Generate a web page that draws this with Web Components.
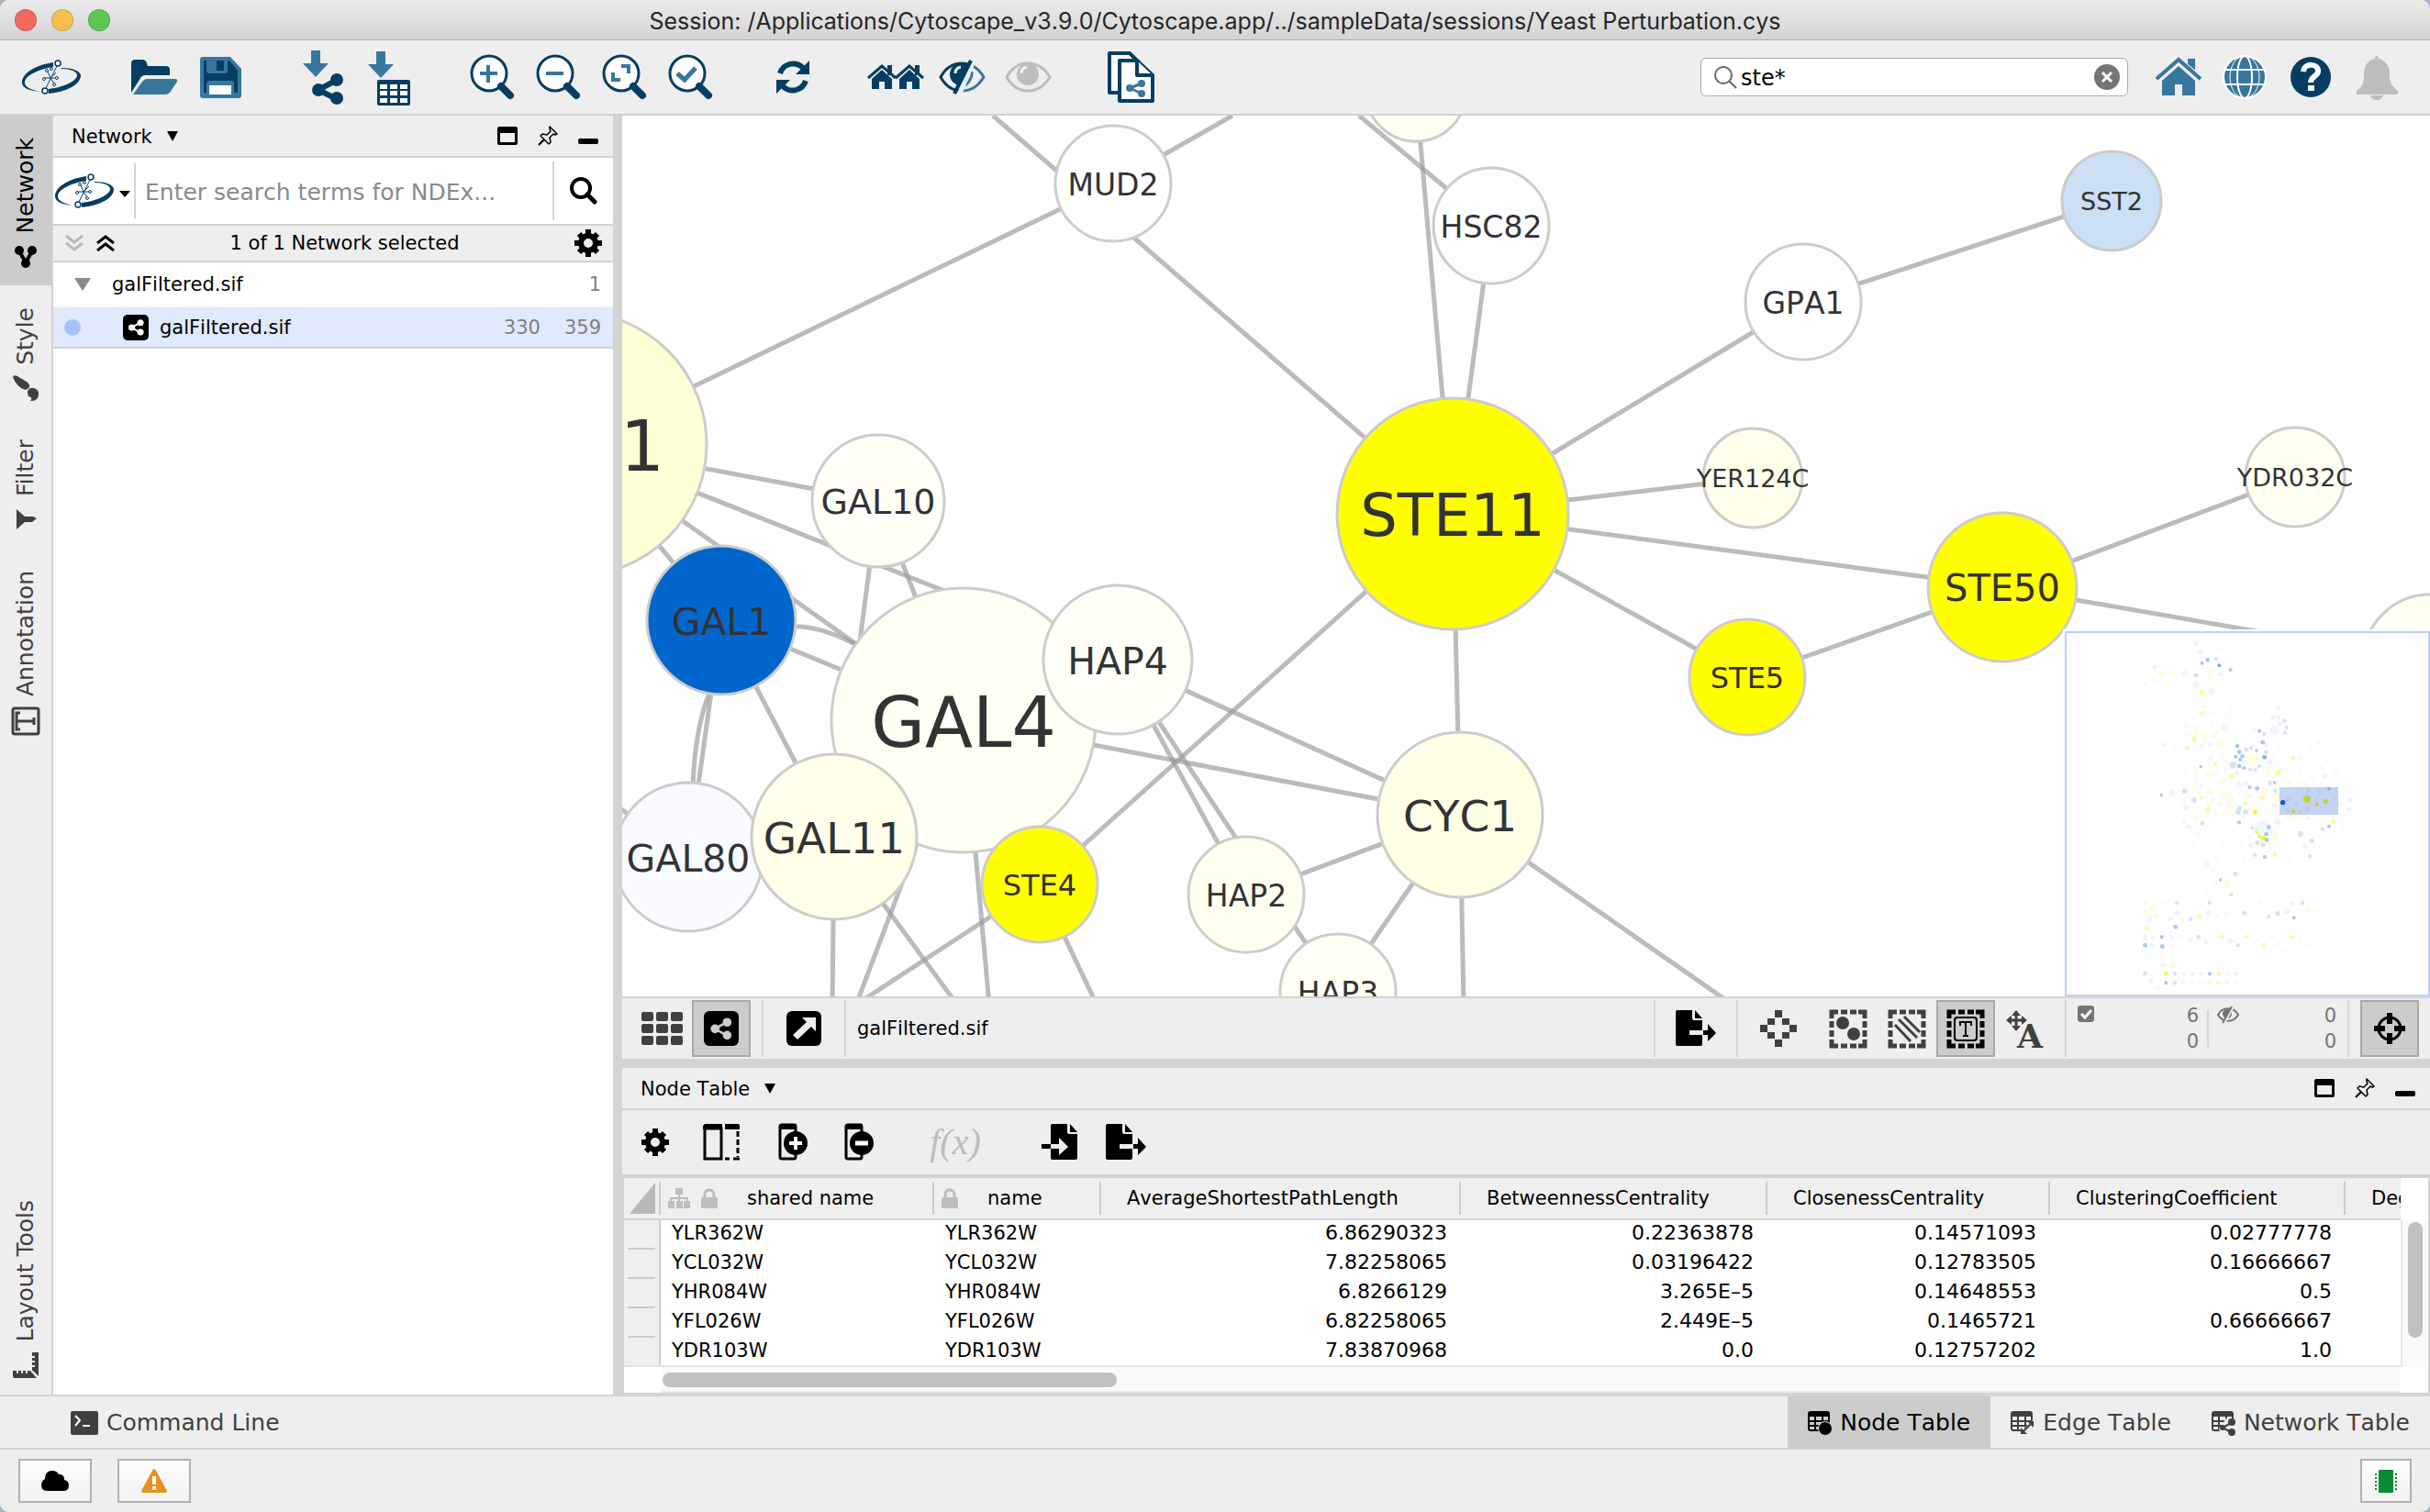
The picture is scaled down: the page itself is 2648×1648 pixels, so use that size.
<!DOCTYPE html>
<html lang="en">
<head>
<meta charset="utf-8">
<title>Cytoscape</title>
<style>
html { background: #a9b4c4; }
body {
  margin: 0;
  font-family: "DejaVu Sans", "Noto Sans", sans-serif;
  font-size: 21px;
  line-height: 28px;
  font-kerning: none;
  color: #000;
}
</style>
</head>
<body>
<cy-app></cy-app>
<script>
const NAVY = '#053e62', STEEL = '#37779e', DARK = '#404040', PALE = '#bdbdbd';

/* ---------- icon library: name -> [width, height, markup] ---------- */
const shareGlyph = (c, w) => `<g fill="${c}" stroke="${c}" stroke-width="${w}"><path d="M21 6 7 14l14 8" fill="none"/><circle cx="22" cy="6" r="4"/><circle cx="7" cy="14" r="4"/><circle cx="22" cy="22" r="4"/></g>`;
const lens = inner => `<circle cx="29" cy="28" r="19" fill="#fff" stroke="${NAVY}" stroke-width="3"/><path d="M42 42 52 52" stroke="${NAVY}" stroke-width="8" stroke-linecap="round"/><path d="${inner}" fill="none" stroke="${STEEL}" stroke-width="4"/>`;
const marquee = (c, inner) => `<g fill="none" stroke="${c}" stroke-width="5"><path d="M2 9V2h7M31 2h7v7M38 32v7h-7M9 39H2v-7"/><path d="M12 2h7M22 2h7M12 39h7M22 39h7M2 12v7M2 22v7M38 12v7M38 22v7"/></g>${inner}`;
const house = (cx, c) => `<path d="M${cx - 15} 33 ${cx} 20 ${cx + 15} 33" fill="none" stroke="${c}" stroke-width="3"/><path d="M${cx + 6} 19h5v11h-5z" fill="${c}"/><path d="M${cx - 11} 34 ${cx} 24l11 10v11h-8v-8h-6v8h-8z" fill="${c}"/>`;
const gridTable = (c, extra) => `<rect x="1" y="1" width="22" height="20" rx="2" fill="none" stroke="${c}" stroke-width="2"/><path d="M1 1h22v5H1z" fill="${c}"/><path d="M1 11h22M1 16h22M8 5v16M16 5v16" stroke="${c}" stroke-width="2"/>${extra}`;
const docBody = 'M2 0h16v9q0 2 2 2h9v26q0 2-2 2H2q-2 0-2-2V2q0-2 2-2z';
const eye = (c, w) => `<path d="M9 32C20 12 44 12 56 32 44 52 20 52 9 32z" fill="none" stroke="${c}" stroke-width="${w}"/>`;

const ICONS = {
  logo: [64, 64, `<g fill="${NAVY}"><path d="M34 16C14 19 0 28 0 38c0 6 8 9 20 10C10 46 3 43 3 38c0-7 13-14 31-17z"/><path d="M43 22c12 0 20 3 21 8 0 10-15 18-35 20v-5c17-2 31-9 31-15 0-4-7-7-17-7z"/></g><g fill="none" stroke="${NAVY}" stroke-width="1"><path d="M38 20 26 44M31 33l-3-7M31 33l6-6M31 33h7M31 33l4 6M31 33h-6"/><g fill="#f6f6f6"><circle cx="39" cy="17" r="3" stroke-width="1.5"/><circle cx="25" cy="47" r="3" stroke-width="1.5"/><circle cx="27" cy="25" r="1.5"/><circle cx="38" cy="33" r="1.5"/><circle cx="35" cy="40" r="1.5"/><circle cx="24" cy="34" r="1.5"/><circle cx="32" cy="23" r="1.5"/></g></g>`],
  open: [64, 64, `<path d="M7 17q0-4 4-4h8q4 0 5 4l1 3h20q4 0 4 4v6H22q-4 0-6 5L7 49z" fill="${NAVY}"/><path d="M9 51 19 37q2-3 5-3h31q3 0 2 3l-8 12q-2 2-5 2z" fill="${STEEL}"/>`],
  save: [64, 64, `<path d="M13 10h30l12 13v29q0 3-3 3H13q-3 0-3-3V13q0-3 3-3z" fill="${STEEL}"/><path d="M14 14h28l9 11v24H14z" fill="${NAVY}"/><path d="M17 12h23v13q0 3-3 3H20q-3 0-3-3z" fill="${STEEL}"/><path d="M28 14h8v11h-8z" fill="${NAVY}"/><path d="M17 54V40q0-4 4-4h23q3 0 3 4v14z" fill="${STEEL}"/><path d="M20 41h24v10H20z" fill="#fff"/>`],
  importNet: [64, 64, `<path d="M19 3h10v14h9L24 32 10 17h9z" fill="${STEEL}"/><path d="M47 35 27 46l20 10" fill="none" stroke="${NAVY}" stroke-width="6"/><g fill="${NAVY}"><circle cx="47" cy="35" r="7"/><circle cx="27" cy="46" r="7"/><circle cx="47" cy="55" r="7"/></g>`],
  importTable: [64, 64, `<path d="M18 4h10v14h9L23 33 9 18h9z" fill="${STEEL}"/><rect x="19" y="35" width="36" height="28" rx="2" fill="${NAVY}"/><path fill="#fff" d="M22 40h8v5h-8zM33 40h8v5h-8zM44 40h8v5h-8zM22 47h8v5h-8zM33 47h8v5h-8zM44 47h8v5h-8zM22 55h8v5h-8zM33 55h8v5h-8zM44 55h8v5h-8z"/>`],
  zoomIn: [64, 64, lens('M19 28h19M28 19v19')],
  zoomOut: [64, 64, lens('M19 28h19')],
  zoomFit: [64, 64, lens('M29 20h8v8M20 27v8h8')],
  zoomSel: [64, 64, `${lens('')}<path d="M18 28l8 7L38 22" fill="none" stroke="${STEEL}" stroke-width="5"/>`],
  refresh: [64, 64, `<path d="M18 28A15 15 0 0 1 43 22M46 36A15 15 0 0 1 21 42" fill="none" stroke="${NAVY}" stroke-width="6"/><path d="M50 14v15H35zM14 50V35h15z" fill="${NAVY}"/>`],
  houses: [64, 64, house(17, NAVY) + house(47, NAVY)],
  hide: [64, 64, `<clipPath id="l"><path d="M0 0h45L22 64H0z"/></clipPath><clipPath id="r"><path d="M50 8h14v56H27z"/></clipPath><g clip-path="url(#l)">${eye(NAVY, 3)}<circle cx="31" cy="29" r="12" fill="${NAVY}"/><path d="M25 28q0-6 6-7" fill="none" stroke="#eee" stroke-width="3"/></g><g clip-path="url(#r)">${eye(STEEL, 3)}<path d="M43 26q1 8-7 15" fill="none" stroke="${STEEL}" stroke-width="3"/></g><path d="M42 14 24 50" stroke="${NAVY}" stroke-width="4"/>`],
  show: [64, 64, `${eye(PALE, 3)}<circle cx="32" cy="29" r="12" fill="${PALE}"/><path d="M25 28q0-6 6-7" fill="none" stroke="#eee" stroke-width="3"/>`],
  docs: [64, 64, `<g fill="#fff" stroke="${NAVY}" stroke-width="4" stroke-linejoin="round"><path d="M20 49H9V6h22l10 10z"/><path d="M20 14h19l17 16v28H20z"/><path d="M39 14v16h17"/></g><path d="M44 39 31 44l13 6" fill="none" stroke="${STEEL}" stroke-width="3"/><g fill="${STEEL}"><circle cx="44" cy="39" r="4"/><circle cx="31" cy="44" r="4"/><circle cx="44" cy="50" r="4"/></g>`],
  home: [64, 64, `<g fill="${STEEL}"><path d="M42 12h8v18l-8-8z"/><path d="M14 36 32 20l18 16v16H36V40h-8v12H14z"/></g><path d="M8 34 32 14l24 20" fill="none" stroke="#eee" stroke-width="7"/><path d="M8 34 32 13l24 21" fill="none" stroke="${STEEL}" stroke-width="4"/>`],
  globe: [64, 64, `<circle cx="32" cy="32" r="24" fill="#fff"/><circle cx="32" cy="32" r="22" fill="${STEEL}"/><g fill="none" stroke="#fff" stroke-width="2"><ellipse cx="32" cy="32" rx="8" ry="23"/><ellipse cx="32" cy="32" rx="16" ry="23" stroke-width="1"/><path d="M9 24h46M9 40h46"/></g>`],
  help: [64, 64, `<circle cx="32" cy="32" r="22" fill="${NAVY}"/><path d="M24 26c1-10 17-9 16 0 0 5-8 5-8 12" fill="none" stroke="#fff" stroke-width="6"/><path d="M29 41h7v6h-7z" fill="#fff"/>`],
  bell: [64, 64, `<path d="M32 9q2 0 2 3c9 2 12 9 12 17 0 9 2 13 9 18v4H10v-4c7-5 8-9 8-18 0-8 3-15 12-17q0-3 2-3zM25 52h14q-1 5-7 5t-7-5z" fill="${PALE}"/>`],
  lensThin: [26, 26, `<circle cx="11" cy="11" r="9" fill="none" stroke="#666" stroke-width="2"/><path d="M17 17l8 8" stroke="#666" stroke-width="2"/>`],
  clear: [28, 28, `<circle cx="14" cy="14" r="14" fill="#757575"/><path d="M9 9l10 10M19 9 9 19" stroke="#fff" stroke-width="3"/>`],
  lensBold: [30, 30, `<circle cx="12" cy="12" r="10" fill="none" stroke="#000" stroke-width="4"/><path d="M19 19l8 8" stroke="#000" stroke-width="5" stroke-linecap="round"/>`],
  caret: [12, 12, `<path d="M0 0h12L6 11z"/>`],
  smallCaret: [12, 8, `<path d="M0 0h12L6 7z"/>`],
  treeCaret: [18, 14, `<path d="M0 0h18L9 14z" fill="#8a8a8a"/>`],
  float: [22, 20, `<path d="M2 0h18q2 0 2 2v16q0 2-2 2H2q-2 0-2-2V2q0-2 2-2zM3 7v10h16V7z" fill-rule="evenodd"/>`],
  pin: [22, 22, `<path d="M13 1l8 8-2 1-2-1-4 4 1 5-2 2-9-9 2-2 5 1 4-4-1-2z" fill="none" stroke="#000" stroke-width="1.5" stroke-linejoin="round"/><path d="M7 15l-6 6" stroke="#000" stroke-width="2"/>`],
  min: [22, 20, `<rect y="13" width="22" height="6" rx="2"/>`],
  chevDown: [20, 18, `<path d="M1 1l9 7 9-7M1 9l9 7 9-7" fill="none" stroke="#bbb" stroke-width="3"/>`],
  chevUp: [20, 18, `<path d="M1 9l9-7 9 7M1 17l9-7 9 7" fill="none" stroke="#000" stroke-width="3"/>`],
  gear: [30, 30, `<g transform="translate(15 15)"><circle r="8" fill="none" stroke="#000" stroke-width="6"/><g stroke="#000" stroke-width="6"><path d="M0-15v6M0 15V9M-15 0h6M15 0H9"/><path d="M-10-10l4 4M10 10 6 6M-10 10l4-4M10-10 6-6"/></g></g>`],
  netBadge: [28, 28, `<rect width="28" height="28" rx="5"/><g transform="translate(5 5) scale(.64)">${shareGlyph('#fff', 3)}</g>`],
  netBadgeL: [38, 38, `<rect width="38" height="38" rx="6"/><g transform="translate(6 7) scale(.88)">${shareGlyph('#ccc', 3)}</g>`],
  detach: [38, 38, `<rect width="38" height="38" rx="6"/><path d="M17 7h15v15l-5-5-15 14-5-5 15-14z" fill="#eee"/>`],
  grid: [46, 36, [0, 16, 32].map(x => [0, 13, 26].map(y => `<rect x="${x}" y="${y}" width="13" height="10" rx="2" fill="${DARK}"/>`).join('')).join('')],
  exportDoc: [44, 40, `<path d="${docBody}"/><path d="M21 0l8 9h-8z"/><path d="M15 22h15v5H15z" fill="#eee"/><path d="M30 22h5v-7l9 10-9 9v-7h-5z"/>`],
  importDoc: [40, 40, `<g transform="translate(10 0)"><path d="${docBody}"/><path d="M21 0l8 9h-8z"/></g><path d="M0 22h10v5H0z"/><path d="M10 22h9v-7l10 10-10 9v-7h-9z" fill="#eee"/>`],
  diamond: [40, 40, `<path fill="${DARK}" d="M16 0h8v8h-8zM16 32h8v8h-8zM0 16h8v8H0zM32 16h8v8h-8zM8 9h8v7H8zM24 9h8v7h-8zM8 24h8v7H8zM24 24h8v7h-8z"/>`],
  selNodes: [40, 41, marquee(DARK, `<circle cx="14" cy="14" r="7" fill="${DARK}"/><circle cx="26" cy="26" r="7" fill="${DARK}"/>`)],
  selEdges: [40, 41, marquee(DARK, `<path d="M7 16l17 18M11 10l20 20M17 7l17 17" stroke="${DARK}" stroke-width="3"/>`)],
  selAnno: [40, 41, marquee('#000', `<rect x="8" y="8" width="24" height="25" rx="3" fill="none" stroke="#000" stroke-width="2"/><path d="M14 17v-4h12v4M20 13v15M17 28h6" fill="none" stroke="#000" stroke-width="2"/>`)],
  selLabel: [40, 41, `<path d="M11 3v17M3 11h17" stroke="${DARK}" stroke-width="3"/><path fill="${DARK}" d="M11 0l5 6H6zM11 23l5-6H6zM0 11l6-5v10zM23 11l-6-5v10z"/><text x="26" y="41" text-anchor="middle" font-family="DejaVu Serif" font-weight="700" font-size="36" fill="${DARK}">A</text>`],
  checked: [18, 18, `<rect width="18" height="18" rx="3" fill="#757575"/><path d="M4 9l4 4 7-8" fill="none" stroke="#fff" stroke-width="3"/>`],
  hiddenEye: [24, 20, `<path d="M1 10C6 1 18 1 23 10 18 19 6 19 1 10z" fill="none" stroke="#757575" stroke-width="2"/><circle cx="11" cy="9" r="5" fill="#757575"/><path d="M18 1 8 19" stroke="#eee" stroke-width="2"/><path d="M16 1 6 19" stroke="#757575" stroke-width="2"/>`],
  target: [34, 34, `<circle cx="17" cy="17" r="12" fill="none" stroke="#000" stroke-width="3"/><path d="M17 0v12M17 34V22M0 17h12M34 17H22" stroke="#000" stroke-width="6"/>`],
  split: [42, 40, `<path d="M3 5h18v33H3z" fill="none" stroke="#000" stroke-width="3"/><path d="M3 0h19v6H1V2zM25 0h14q2 0 2 2v4H25z"/><path d="M39 8v28" stroke="#000" stroke-width="3" stroke-dasharray="6 3"/><path d="M25 38h5M34 38h7" stroke="#000" stroke-width="3"/>`],
  colAdd: [32, 42, `<rect x="2" y="2" width="17" height="37" rx="2" fill="none" stroke="#000" stroke-width="3"/><path d="M2 1h18v6H1z"/><circle cx="19" cy="22" r="13"/><path d="M12 22h14M19 15v14" stroke="#fff" stroke-width="4"/>`],
  colDel: [32, 42, `<rect x="2" y="2" width="17" height="37" rx="2" fill="none" stroke="#000" stroke-width="3"/><path d="M2 1h18v6H1z"/><circle cx="19" cy="22" r="13"/><path d="M12 22h14" stroke="#fff" stroke-width="5"/>`],
  corner: [28, 34, `<path d="M28 0v34H0z" fill="#b9b9b9"/>`],
  hierarchy: [24, 22, `<g fill="${PALE}"><path d="M8 0h8v7H8zM0 14h7v8H0zM9 14h7v8H9zM17 14h7v8h-7z"/></g><path d="M12 6v8M3 14v-3h18v3" fill="none" stroke="${PALE}" stroke-width="2"/>`],
  lock: [18, 22, `<rect y="10" width="18" height="12" rx="2" fill="${PALE}"/><path d="M4 10V6q1-4 5-4t5 4v4" fill="none" stroke="${PALE}" stroke-width="3"/>`],
  sideNet: [28, 28, `<path d="M6 7l8 14 8-14" fill="none" stroke="#000" stroke-width="4"/><circle cx="7" cy="8" r="5"/><circle cx="21" cy="8" r="5"/><circle cx="14" cy="22" r="5"/>`],
  brush: [28, 28, `<g fill="${DARK}"><path d="M0 2Q1-1 5 1l10 6q4 3 3 6-3 4-7 2Q4 12 0 2z"/><path d="M16 18q1-5 7-4 6 2 5 8-1 6-9 6 2-2 1-4-4 0-4-6z"/></g>`],
  funnel: [28, 28, `<path d="M4 3l9 8h9l4 2-5 4h-8l-9 8z" fill="${DARK}"/>`],
  anno: [32, 32, `<rect x="2" y="2" width="28" height="28" rx="2" fill="none" stroke="${DARK}" stroke-width="3"/><path d="M10 7H6v18h4M6 16h19M25 12v8" fill="none" stroke="${DARK}" stroke-width="3"/>`],
  ruler: [28, 28, `<path d="M21 0h7v26L22 20H21zM0 20h19l7 8H2q-2 0-2-2z" fill="${DARK}"/><path d="M20 5h4M20 10h4M20 15h4M5 19v4M10 19v4M15 19v4" stroke="#eee" stroke-width="2"/>`],
  terminal: [30, 26, `<rect width="30" height="26" rx="2" fill="${DARK}"/><path d="M5 5l5 5-5 6M13 16h8" fill="none" stroke="#fff" stroke-width="2"/>`],
  tabNode: [26, 26, gridTable('#000', '<circle cx="19" cy="19" r="8" fill="#ccc"/><circle cx="19" cy="19" r="7"/>')],
  tabEdge: [26, 26, gridTable(DARK, `<path d="M8 26 26 8v18z" fill="#eee"/><path d="M12 24 24 12" stroke="${DARK}" stroke-width="2"/><path d="M18 11h7v7zM18 25h-7v-7z" fill="${DARK}"/>`)],
  tabNet: [26, 26, gridTable(DARK, `<path d="M8 19l8-11h10v18H10z" fill="#eee"/><path d="M23 12l-11 6 11 6" fill="none" stroke="${DARK}" stroke-width="2"/><g fill="${DARK}"><circle cx="22" cy="12" r="4"/><circle cx="12" cy="18" r="3"/><circle cx="22" cy="23" r="4"/></g>`)],
  cloud: [30, 22, `<path d="M7 22q-7 0-7-6 0-5 4-7 0-9 8-9 5 0 7 4 6-1 6 6 5 1 5 6 0 6-6 6z"/>`],
  warn: [28, 26, `<path d="M14 0q1 0 2 2l12 22q0 2-2 2H2q-2 0-2-2L12 2q1-2 2-2z" fill="#ea9020"/><path d="M14 8v9M14 19v4" stroke="#fff" stroke-width="4"/>`],
  chip: [24, 26, `<rect x="4" y="1" width="16" height="25" rx="1" fill="#0a8b32"/><path d="M1 5v20M23 5v20" stroke="#0a8b32" stroke-width="2" stroke-dasharray="2 2"/>`]
};

/* ---------- helpers ---------- */
function define(tag, render) {
  customElements.define(tag, class extends HTMLElement {
    connectedCallback() {
      if (this.shadowRoot) return;
      this.attachShadow({ mode: 'open' }).innerHTML = render(this);
    }
  });
}
const icon = n => `<cy-icon name="${n}"></cy-icon>`;
const tool = (n, label, attrs = '') => `<cy-tool label="${label}" ${attrs}>${icon(n)}</cy-tool>`;

define('cy-icon', el => {
  const [w, h, body] = ICONS[el.getAttribute('name')];
  return `<style>:host{display:block;flex:none}svg{display:block;overflow:visible}</style><svg width="${w}" height="${h}" viewBox="0 0 ${w} ${h}" aria-hidden="true">${body}</svg>`;
});

/* Flat icon button; "pressed" gives the toggled look, "boxed" the framed one. */
define('cy-tool', el => `<style>
  :host{display:block;flex:none;width:var(--tool-w,72px)}
  button{display:flex;align-items:center;justify-content:center;box-sizing:border-box;width:100%;height:var(--tool-h,80px);margin:0;padding:0;border:0;background:none;color:inherit;font:inherit}
  :host([pressed]) button{background:#ccc;border:2px solid #a9a9a9}
  :host([boxed]) button{background:linear-gradient(#fcfcfc,#f3f3f3);border:2px solid #b0b0b0}
</style><button type="button" aria-label="${el.getAttribute('label')}"><slot></slot></button>`);

/* Panel title bar with its three window controls. */
define('cy-panel-header', () => `<style>
  :host{display:flex;align-items:center;height:44px;padding:0 16px 0 20px;border-bottom:2px solid #d3d3d3;background:#eee;--tool-w:22px;--tool-h:28px}
  .menu{display:flex;align-items:center;gap:16px;padding:2px 0 0;border:0;background:none;font:inherit;font-kerning:inherit;color:inherit}
  .controls{display:flex;gap:22px;margin-left:auto}
</style><button class="menu" type="button"><slot></slot>${icon('caret')}</button>
<div class="controls">${tool('float', 'Float')}${tool('pin', 'Unpin')}${tool('min', 'Minimize')}</div>`);

define('cy-title-bar', () => `<style>
  :host{display:flex;align-items:center;height:43px;border-bottom:1px solid #aaa;background:linear-gradient(#ebebeb,#d3d3d3);padding:0 16px}
  .lights{display:flex;gap:16px;width:200px}
  button{width:24px;height:24px;padding:0;border:1px solid rgba(0,0,0,.15);border-radius:50%}
  .c{background:#ee6a5f}.m{background:#f5bf4f}.z{background:#61c555}
  h1{flex:1;margin:0 200px 0 0;padding-top:2px;text-align:center;font:400 25px/32px Inter,"Noto Sans",sans-serif;font-kerning:none;color:#262626;white-space:nowrap}
</style><div class="lights"><button class="c" aria-label="Close"></button><button class="m" aria-label="Minimize"></button><button class="z" aria-label="Zoom"></button></div>
<h1>Session: /Applications/Cytoscape_v3.9.0/Cytoscape.app/../sampleData/sessions/Yeast Perturbation.cys</h1>`);

define('cy-toolbar', () => `<style>
  :host{display:flex;align-items:center;background:#eee;border-bottom:2px solid #d2d2d2;padding:0 22px 0 20px}
  .groups{display:flex;gap:40px}.g{display:flex}
  .search{display:flex;align-items:center;gap:4px;box-sizing:border-box;width:466px;height:42px;margin:0 19px 0 auto;padding:0 8px 0 13px;border:1px solid #acacac;border-radius:6px;background:#fff;--tool-w:28px;--tool-h:28px}
  input{flex:1;min-width:0;padding:2px 0 0;border:0;outline:0;background:none;font:inherit;font-size:24px;color:#000}
</style>
<div class="groups">
 <div class="g">${tool('logo', 'Cytoscape')}</div>
 <div class="g">${tool('open', 'Open session')}${tool('save', 'Save session')}</div>
 <div class="g">${tool('importNet', 'Import network')}${tool('importTable', 'Import table')}</div>
 <div class="g">${tool('zoomIn', 'Zoom in')}${tool('zoomOut', 'Zoom out')}${tool('zoomFit', 'Fit content')}${tool('zoomSel', 'Fit selected')}</div>
 <div class="g">${tool('refresh', 'Apply layout')}</div>
 <div class="g">${tool('houses', 'First neighbors')}${tool('hide', 'Hide selected')}${tool('show', 'Show all')}</div>
 <div class="g">${tool('docs', 'New network from selection')}</div>
</div>
<div class="search">${icon('lensThin')}<input type="text" aria-label="Search nodes and edges" value="ste*">${tool('clear', 'Clear search')}</div>
<div class="g">${tool('home', 'Home')}${tool('globe', 'Web')}${tool('help', 'Help')}${tool('bell', 'Notifications')}</div>`);

define('cy-side-tab', el => `<style>
  :host{display:block}
  button{display:flex;flex-direction:column;align-items:center;gap:11px;width:100%;padding:24px 0 18px;border:0;background:none;color:#404040;font:inherit;font-kerning:inherit;font-size:25px;line-height:30px}
  :host([active]) button{background:#ccc;color:#000}
  span{writing-mode:vertical-rl;transform:rotate(180deg);white-space:nowrap}
</style><button type="button"><span><slot></slot></span>${icon(el.getAttribute('icon'))}</button>`);

define('cy-sidebar', () => `<style>
  :host{display:flex;flex-direction:column;flex:none;width:56px;border-right:2px solid #d3d3d3;background:#eee}
  cy-side-tab:last-child{margin-top:auto}
</style><cy-side-tab icon="sideNet" active>Network</cy-side-tab><cy-side-tab icon="brush">Style</cy-side-tab><cy-side-tab icon="funnel">Filter</cy-side-tab><cy-side-tab icon="anno">Annotation</cy-side-tab><cy-side-tab icon="ruler">Layout Tools</cy-side-tab>`);

define('cy-network-panel', () => `<style>
  :host{display:flex;flex-direction:column;flex:none;width:610px;background:#fff;border-right:10px solid #d3d3d3}
  .search{display:flex;align-items:center;height:72px;border-bottom:2px solid #d3d3d3}
  .source{display:flex;align-items:center;gap:6px;height:60px;padding:0 4px 0 2px;border:0;border-right:2px solid #d3d3d3;background:none}
  .source cy-icon:last-child{margin-top:8px}
  input{flex:1;min-width:0;padding:3px 10px 0;border:0;outline:0;font:inherit;font-kerning:inherit;font-size:25px;line-height:30px}
  input::placeholder{color:#8a8a8a;opacity:1}
  .go{display:flex;--tool-w:64px;--tool-h:64px;border-left:2px solid #d3d3d3}
  .status{display:flex;align-items:center;gap:14px;height:38px;padding:0 12px 0 13px;border-bottom:2px solid #d3d3d3;background:#eee;--tool-w:20px;--tool-h:30px}
  .status p{flex:1;margin:0;text-align:center}
  .status cy-tool:last-child{--tool-w:30px}
  .row{display:flex;align-items:center;height:48px;padding:0 13px 0 23px}
  .row .name{flex:1;margin-left:23px}
  .num{color:#808080;margin-left:26px}
  .row.sel{height:42px;padding-left:12px;border-top:2px solid #eee;border-bottom:2px solid #d3d3d3;background:#e1e9ff}
  .dot{width:18px;height:18px;border-radius:50%;background:#a9c0fb;margin-right:46px}
  .row.sel .name{margin-left:12px}
</style>
<cy-panel-header>Network</cy-panel-header>
<div class="search"><button class="source" type="button" aria-label="Network source">${icon('logo')}${icon('smallCaret')}</button><input type="text" aria-label="Search NDEx" placeholder="Enter search terms for NDEx..."><div class="go">${tool('lensBold', 'Search')}</div></div>
<div class="status">${tool('chevDown', 'Expand all')}${tool('chevUp', 'Collapse all')}<p>1 of 1 Network selected</p>${tool('gear', 'Options')}</div>
<div class="row">${icon('treeCaret')}<span class="name">galFiltered.sif</span><span class="num">1</span></div>
<div class="row sel"><span class="dot"></span>${icon('netBadge')}<span class="name">galFiltered.sif</span><span class="num">330</span><span class="num">359</span></div>`);

/* ---------- network graph ---------- */
const NODES = {
  L: [626, 484, 144, '#ffffd5'], TOP: [1543, 99, 55, '#fffff0'], R: [2648, 721, 73, '#fffff2'],
  MUD2: [1213, 200, 63, '#fefefe', 33], HSC82: [1625, 246, 63, '#fcfdff', 33],
  SST2: [2301, 219, 54, '#cbdff5', 27], GPA1: [1965, 329, 63, '#fdfeff', 33],
  STE11: [1583, 560, 126, '#ffff00', 64], YER124C: [1910, 521, 54, '#ffffeb', 27],
  YDR032C: [2501, 520, 54, '#fffff2', 27], STE50: [2182, 640, 81, '#ffff00', 40],
  STE5: [1904, 738, 63, '#ffff00', 32], CYC1: [1591, 888, 90, '#ffffe6', 47],
  HAP2: [1358, 975, 63, '#fffff0', 33], HAP3: [1458, 1081, 63, '#fffff5', 33],
  GAL4: [1050, 785, 144, '#fffff3', 76], HAP4: [1218, 719, 81, '#fffff8', 41],
  GAL10: [957, 546, 72, '#fffff7', 38], GAL1: [786, 676, 81, '#0066cc', 41],
  GAL80: [750, 934, 81, '#f8fbff', 41], GAL11: [909, 912, 90, '#ffffea', 47],
  STE4: [1133, 964, 63, '#ffff00', 32]
};
const LINKS = [
  ['MUD2', 'L'], ['MUD2', 1343, 126], ['STE11', 1082, 126], ['HSC82', 'STE11'], ['TOP', 'STE11'], ['HSC82', 1481, 126],
  ['STE11', 'GPA1'], ['GPA1', 'SST2'], ['STE11', 'YER124C'], ['STE11', 'STE50'], ['STE11', 'STE5'], ['STE5', 'STE50'],
  ['STE50', 'YDR032C'], ['STE50', 'R'], ['STE11', 'STE4'], ['STE11', 'CYC1'], ['CYC1', 1595, 1095], ['CYC1', 1888, 1095],
  ['CYC1', 'HAP2'], ['CYC1', 'HAP3'], ['CYC1', 'HAP4'], ['CYC1', 'GAL4'], ['HAP4', 'HAP2'], ['HAP4', 'HAP3'],
  ['L', 'GAL10'], ['L', 'HAP4'], ['L', 'GAL4'], ['L', 'GAL1'], ['GAL1', 'GAL4'], ['GAL10', 'GAL4'], ['GAL10', 'GAL11'],
  ['GAL1', 'GAL11'], ['GAL1', 'GAL80'], ['GAL80', 670, 877], ['GAL11', 907, 1095], ['GAL11', 1043, 1095],
  ['GAL4', 933, 1095], ['STE4', 933, 1095], ['GAL4', 1078, 1095], ['STE4', 1195, 1095]
];
function graphMarkup() {
  const edges = LINKS.map(([a, b, c]) => {
    const p = NODES[a], q = typeof b === 'string' ? NODES[b] : [b, c];
    return `<path d="M${p[0]} ${p[1]}L${q[0]} ${q[1]}"/>`;
  }).join('');
  const nodes = Object.entries(NODES).map(([id, [x, y, r, fill, fs]]) =>
    `<circle cx="${x}" cy="${y}" r="${r}" fill="${fill}"/>` +
    (fs ? `<text x="${x}" y="${Math.round(y + fs * 0.38)}" font-size="${fs}">${id}</text>` : '')).join('');
  return `<g transform="translate(-678 -126)"><g class="e">${edges}<path d="M860 683Q896 681 940 707M776 748Q757 790 755 860"/></g><g class="n">${nodes}<text x="700" y="513" font-size="76">1</text></g></g>`;
}

/* overview dots: colour class, then x y r triples in 1/3-pixel units */
const OVERVIEW = {
  '#fffff0': '559 54 6 542 81 7 528 263 6 512 293 10 499 254 6 574 276 6 553 301 6 573 307 6 512 324 6 733 326 6 632 358 6 425 360 6 445 362 6 591 342 5 390 401 7 509 420 6 541 427 9 553 442 6 457 475 6 527 486 6 559 476 7 455 518 7 468 550 6 543 513 8 573 588 12 556 570 6 653 387 11 688 478 10 669 446 6 714 435 6 728 458 7 760 470 9 797 489 6 867 475 7 894 451 7 830 410 6 799 439 6 857 386 6 799 517 7 819 525 6 601 549 6 623 561 7 578 628 6 494 627 6 538 654 6 637 695 7 610 721 6 550 721 6 581 673 6 703 717 6 742 735 6 718 671 6 870 637 8 940 663 6 785 536 6 811 626 6 526 766 7 520 846 7 495 870 5 545 885 6 517 807 7 614 773 6 761 766 6 742 681 6 646 933 7 586 951 6 821 967 6 857 939 5 412 1025 7 419 1054 6 515 1060 6 652 1037 6 802 1037 6 828 1051 6 725 1048 6 747 1070 6 349 1085 7 382 1085 7 447 1174 6 503 1174 6 381 1055 6',
  '#ffffdc': '508 154 9 500 173 6 292 198 6 320 182 7 348 162 8 385 160 7 485 272 6 427 332 7 461 341 7 461 356 6 492 368 7 486 382 7 529 352 6 516 367 6 534 390 11 641 442 20 590 376 5 424 482 7 457 493 7 499 491 9 543 512 8 503 548 9 549 552 7 564 555 6 573 568 8 512 577 6 539 589 7 503 591 7 456 635 7 525 619 6 553 622 7 417 580 6 463 688 7 447 717 5 617 635 6 635 565 6 632 605 6 684 546 8 725 565 14 763 521 7 736 479 6 697 494 7 706 467 6 729 407 6 840 505 8 916 488 6 714 698 11 788 635 6 755 632 6 772 632 6 866 732 6 930 588 7 561 853 10 292 913 7 346 914 6 318 931 10 295 943 9 328 955 7 413 969 6 528 957 5 557 950 6 669 913 6 826 937 7 706 1024 6 384 1116 6 419 1144 6 562 1144 5 418 1174 6 475 1174 6 508 1174 6 590 1174 6 333 1189 6',
  '#ffff8c': '479 224 8 478 292 6 454 377 7 430 405 7 523 458 6 575 499 7 726 489 8 776 439 6 675 568 7 620 588 6 478 570 5 497 608 8 716 753 6 909 647 7 298 996 6 471 957 7 543 1024 6 624 1024 6 774 1024 6 678 1051 6 533 1144 6 532 1174 6',
  '#ffff00': '652 616 7 661 678 9 679 700 8 361 1144 6',
  '#f1f6fc': '460 63 6 473 94 8 324 141 6 422 160 7 540 165 7 458 199 8 509 221 9 551 340 9 648 346 7 356 395 6 478 401 7 505 395 7 507 440 6 476 531 6 380 553 8 615 454 8 593 488 7 601 526 8 621 520 8 426 601 6 420 645 6 435 664 6 701 451 7 688 397 7 734 327 5 881 497 7 824 636 7 962 576 7 960 605 6 815 727 7 726 647 9 715 593 8 703 679 6 640 724 8 497 785 7 397 944 8 309 967 9 374 967 7 292 1025 7 319 1026 7 378 1024 6 440 1032 7 492 1041 7 500 944 8 571 1036 7 772 913 6 757 940 8 315 1052 7 351 1115 6 447 1144 6 476 1144 6 590 1144 6 560 1174 6 312 1168 7 676 665 22 716 348 13 710 306 7 729 307 6 727 275 7',
  '#d6e5f6': '460 168 7 524 114 6 580 461 11 623 411 6 639 405 6 682 360 6 688 419 7 666 465 6 653 478 6 636 476 6 749 317 6 755 338 6 750 356 6 422 547 8 453 576 8 601 603 8 597 615 8 621 615 8 480 652 7 701 520 7 718 546 6 643 667 6 666 695 6 659 716 7 679 723 7 652 755 6 801 687 9 837 710 7 831 760 6 873 671 6 588 817 7 574 885 6 397 913 6 441 966 6 617 946 7 697 957 6 726 947 7 807 913 6 467 1024 6 597 1051 6 292 1144 6 390 1144 6 390 1174 6 503 913 6',
  '#a9caee': '479 128 6 497 118 7 572 150 6 594 399 7 600 419 7 589 434 6 611 433 7 603 444 6 600 465 7 616 471 6 657 414 5 677 387 7 666 350 6 634 534 6 659 538 7 716 519 5 346 560 5 475 467 5 600 649 6 697 665 7 689 687 7 690 706 7 684 762 6 539 837 5 347 1024 6 349 1055 7 293 1051 7 392 991 7 779 961 6 504 1144 6 361 1174 6 894 662 6',
  '#7fb0e5': '535 136 6 683 436 7'
};
const overviewDots = () => Object.entries(OVERVIEW).map(([c, list]) => {
  const n = list.split(' ');
  let s = '';
  for (let i = 0; i < n.length; i += 3) s += `<circle cx="${n[i]}" cy="${n[i + 1]}" r="${n[i + 2]}"/>`;
  return `<g fill="${c}">${s}</g>`;
}).join('');

define('cy-overview', () => `<style>
  :host{display:block;box-sizing:border-box;width:398px;height:398px;border:2px solid #bfcffa;background:#fefefe;outline:2px solid #fff}
  svg{display:block}
</style><svg width="394" height="394" viewBox="36 30 1182 1182" role="img" aria-label="Network overview"><g stroke="#888" stroke-opacity=".09" stroke-width="2">${overviewDots()}</g>
<rect x="733" y="535" width="190" height="88" fill="#c3d3f4" stroke="#b7caf3" stroke-width="2"/>
<g fill="#bccbe8"><circle cx="756" cy="608" r="9"/><circle cx="823" cy="605" r="9"/><circle cx="800" cy="614" r="6"/><circle cx="861" cy="549" r="7"/><circle cx="827" cy="543" r="6"/><circle cx="760" cy="573" r="8"/><circle cx="786" cy="588" r="7"/><circle cx="855" cy="569" r="6"/><circle cx="914" cy="569" r="5"/></g>
<circle cx="894" cy="539" r="6" fill="#8db0ea"/>
<circle cx="743" cy="584" r="8" fill="#0a5bd0"/><g fill="#c3d22c"><circle cx="822" cy="573" r="12"/><circle cx="882" cy="580" r="8"/><circle cx="855" cy="590" r="6"/><circle cx="778" cy="613" r="6"/></g></svg>`);

define('cy-canvas', () => `<style>
  :host{display:block;position:relative;flex:1;min-height:600px;overflow:hidden;background:#fefefe}
  svg{position:absolute;inset:0;width:100%;height:100%}
  .e{fill:none;stroke:#999;stroke-opacity:.67;stroke-width:5}
  circle{stroke:#ccc;stroke-width:3}
  text{fill:#333;text-anchor:middle;stroke:none}
  cy-overview{position:absolute;right:0;bottom:0}
</style><svg role="img" aria-label="galFiltered.sif network">${graphMarkup()}</svg><cy-overview></cy-overview>`);

define('cy-view-bar', () => `<style>
  :host{display:flex;align-items:center;height:66px;border-top:2px solid #d3d3d3;border-bottom:10px solid #d3d3d3;background:#eee;padding:0 12px;--tool-w:64px;--tool-h:62px}
  .sep{width:2px;height:62px;background:#d6d6d6}
  .g{display:flex;padding:0 12px}
  .left{padding-left:0}
  .modes{gap:0}
  .modes cy-tool:first-child{margin-right:12px}
  .last{padding-right:0}
  .name{flex:1;padding-left:12px}
  .counts{display:flex;color:#757575;padding:0 12px;height:56px}
  .counts cy-icon{margin-top:3px}
  .counts output{display:grid;grid-template-rows:28px 28px;text-align:right}
  .a{width:114px}.b{width:106px}
  .counts i{width:2px;height:40px;margin:8px 9px 0;background:#d6d6d6}
</style>
<div class="g left">${tool('grid', 'Grid view')}${tool('netBadgeL', 'Network view', 'pressed')}</div><span class="sep"></span>
<div class="g">${tool('detach', 'Detach view')}</div><span class="sep"></span>
<span class="name">galFiltered.sif</span>
<span class="sep"></span><div class="g">${tool('exportDoc', 'Export image')}</div><span class="sep"></span>
<div class="g modes">${tool('diamond', 'Selection mode')}${tool('selNodes', 'Select nodes')}${tool('selEdges', 'Select edges')}${tool('selAnno', 'Select annotations', 'pressed')}${tool('selLabel', 'Move labels')}</div><span class="sep"></span>
<div class="counts">${icon('checked')}<output class="a"><span>6</span><span>0</span></output><i></i>${icon('hiddenEye')}<output class="b"><span>0</span><span>0</span></output></div><span class="sep"></span>
<div class="g last">${tool('target', 'Toggle overview', 'pressed')}</div>`);

/* ---------- data table ---------- */
const ROWS = [
  ['YLR362W', '6.86290323', '0.22363878', '0.14571093', '0.02777778'],
  ['YCL032W', '7.82258065', '0.03196422', '0.12783505', '0.16666667'],
  ['YHR084W', '6.8266129', '3.265E–5', '0.14648553', '0.5'],
  ['YFL026W', '6.82258065', '2.449E–5', '0.1465721', '0.66666667'],
  ['YDR103W', '7.83870968', '0.0', '0.12757202', '1.0']
];
define('cy-data-table', () => `<style>
  :host{display:grid;grid-template-columns:1fr 30px;background:#fff;border:solid #d3d3d3;border-width:4px 2px 2px}
  .view{overflow:hidden;height:204px;border-bottom:2px solid #e3e3e3}
  table{width:2016px;table-layout:fixed;border-collapse:separate;border-spacing:0}
  th{height:44px;padding:0;border-bottom:2px solid #d3d3d3;background:#efefef;font-weight:400;text-align:left;white-space:nowrap}
  th div{display:flex;align-items:center;height:36px;padding-left:28px;border-right:2px solid #ccc}
  th .icons{gap:12px;padding-left:8px}
  th .icons span{margin-left:20px}
  th:first-child div{justify-content:flex-end;padding:0 4px 0 0}
  tbody th{height:32px;padding:0 4px;border:0;border-right:2px solid #ccc}
  tbody th div,tbody th:first-child div{height:30px;border:0;border-bottom:2px solid #ccc}
  tbody tr:last-child th div{border-color:transparent}
  td{height:28px;padding:0 15px 4px 12px;font-size:22px;text-align:right;line-height:28px}
  .s{font-size:21px;text-align:left}
  .v{border-left:2px solid #e8e8e8;background:#fafafa;margin-top:46px;padding:2px 6px}
  .v i{display:block;width:16px;height:126px;border-radius:8px;background:#c1c1c1}
  .h{margin-left:40px;height:28px;background:#fafafa;border-bottom:2px solid #ececec;box-sizing:border-box;padding:6px 2px 0}
  .h i{display:block;width:495px;height:16px;border-radius:8px;background:#c1c1c1}
</style>
<div class="view"><table aria-label="Node Table">
<colgroup><col style="width:40px"><col style="width:298px"><col style="width:182px"><col style="width:392px"><col style="width:334px"><col style="width:308px"><col style="width:322px"><col></colgroup>
<thead><tr><th><div>${icon('corner')}</div></th><th><div class="icons">${icon('hierarchy')}${icon('lock')}<span>shared name</span></div></th><th><div class="icons">${icon('lock')}<span>name</span></div></th><th><div>AverageShortestPathLength</div></th><th><div>BetweennessCentrality</div></th><th><div>ClosenessCentrality</div></th><th><div>ClusteringCoefficient</div></th><th><div>Degree</div></th></tr></thead>
<tbody>${ROWS.map(r => `<tr><th scope="row"><div></div></th><td class="s">${r[0]}</td><td class="s">${r[0]}</td>${r.slice(1).map(v => `<td>${v}</td>`).join('')}<td></td></tr>`).join('')}</tbody></table></div>
<div class="v"><i></i></div><div class="h"><i></i></div>`);

define('cy-table-panel', () => `<style>
  :host{display:block;background:#eee}
  .bar{display:flex;align-items:center;height:70px;--tool-h:70px}
  .g{display:flex}
  .cols{margin-left:6px}
  .fx{margin:0 42px 0 33px}
  em{font:italic 40px/44px "Liberation Serif",serif;color:#bdbdbd}
</style><cy-panel-header>Node Table</cy-panel-header>
<div class="bar"><div class="g">${tool('gear', 'Options')}${tool('split', 'Show columns')}</div><div class="g cols">${tool('colAdd', 'Add column')}${tool('colDel', 'Delete column')}</div><div class="g fx"><cy-tool label="Function builder"><em>f(x)</em></cy-tool></div><div class="g">${tool('importDoc', 'Import table')}${tool('exportDoc', 'Export table')}</div></div>
<cy-data-table></cy-data-table>`);

define('cy-bottom-tab', el => `<style>
  :host{display:block}
  button{display:flex;align-items:center;gap:9px;height:100%;padding:2px 22px 0;border:0;background:none;color:#404040;font:inherit;font-kerning:inherit;font-size:25px;white-space:nowrap}
  :host([active]) button{background:#ccc;color:#000}
</style><button type="button">${icon(el.getAttribute('icon'))}<slot></slot></button>`);

define('cy-bottom-bar', () => `<style>
  :host{display:flex;height:56px;padding-left:55px;border:solid #d3d3d3;border-width:2px 0;background:#eee}
  .right{display:flex;margin-left:auto}
</style><cy-bottom-tab icon="terminal">Command Line</cy-bottom-tab><div class="right"><cy-bottom-tab icon="tabNode" active>Node Table</cy-bottom-tab><cy-bottom-tab icon="tabEdge">Edge Table</cy-bottom-tab><cy-bottom-tab icon="tabNet">Network Table</cy-bottom-tab></div>`);

define('cy-status-bar', () => `<style>
  :host{display:flex;align-items:center;gap:28px;height:68px;padding:0 20px;background:#eee;--tool-w:80px;--tool-h:48px}
  cy-tool:last-child{margin-left:auto;--tool-w:56px}
</style>${tool('cloud', 'Remote services', 'boxed')}${tool('warn', 'Warnings', 'boxed')}${tool('chip', 'Memory', 'boxed')}`);

define('cy-app', () => `<style>
  :host{display:flex;flex-direction:column;min-height:100vh;overflow:hidden;border-radius:10px;background:#eee}
  main{display:flex;flex:1}
  .work{display:flex;flex-direction:column;flex:1;min-width:0}
</style><cy-title-bar></cy-title-bar><cy-toolbar></cy-toolbar>
<main><cy-sidebar></cy-sidebar><cy-network-panel></cy-network-panel>
<div class="work"><cy-canvas></cy-canvas><cy-view-bar></cy-view-bar><cy-table-panel></cy-table-panel></div></main>
<cy-bottom-bar></cy-bottom-bar><cy-status-bar></cy-status-bar>`);
</script>
</body>
</html>
